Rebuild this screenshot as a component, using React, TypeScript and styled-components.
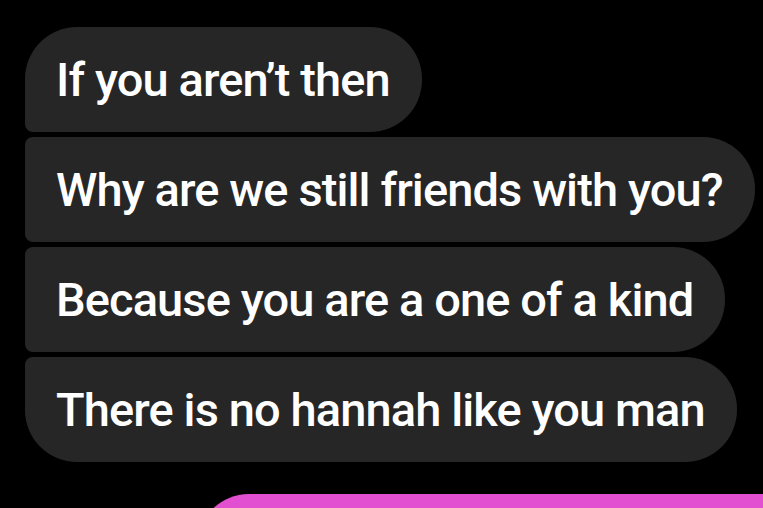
import React from 'react';
import styled, { createGlobalStyle } from 'styled-components';

const GlobalStyle = createGlobalStyle`
  html, body {
    margin: 0;
    padding: 0;
    background: #000;
  }
  body {
    font-family: Roboto, "Noto Sans", "Liberation Sans", sans-serif;
  }
`;

const messages = [
  'If you aren’t then',
  'Why are we still friends with you?',
  'Because you are a one of a kind',
  'There is no hannah like you man',
];

type Position = 'first' | 'middle' | 'last';

function App() {
  return (
    <>
      <GlobalStyle />
      <Thread>
        <Group>
          {messages.map((text, i) => (
            <Bubble
              key={i}
              $position={i === 0 ? 'first' : i === messages.length - 1 ? 'last' : 'middle'}
            >
              {text}
            </Bubble>
          ))}
        </Group>
        <OwnBubble />
      </Thread>
    </>
  );
}

export default App;

// the screen is a crop, the sent bubble at the bottom is cut off
const Thread = styled.div`
  display: flex;
  flex-direction: column;
  width: 763px;
  height: 508px;
  box-sizing: border-box;
  padding: 27px 0 0 25px;
  overflow: hidden;
`;

const Group = styled.div`
  display: flex;
  flex-direction: column;
  align-items: flex-start;
  gap: 5px;
`;

const Bubble = styled.div<{ $position: Position }>`
  display: flex;
  align-items: center;
  flex-shrink: 0;
  height: 105px;
  box-sizing: border-box;
  padding: 0 32px 1px 31px;
  background: #262626;
  color: #fff;
  font-size: 47px;
  font-weight: 500;
  letter-spacing: -0.9px;
  white-space: nowrap;
  border-radius: ${({ $position }) =>
    $position === 'first'
      ? '52px 52px 52px 8px'
      : $position === 'last'
      ? '8px 52px 52px 52px'
      : '8px 52px 52px 8px'};
`;

const OwnBubble = styled.div`
  align-self: flex-end;
  flex-shrink: 0;
  margin-top: 32px;
  margin-right: -60px;
  width: 626px;
  height: 105px;
  background: #e24fd0;
  border-radius: 52px;
`;
